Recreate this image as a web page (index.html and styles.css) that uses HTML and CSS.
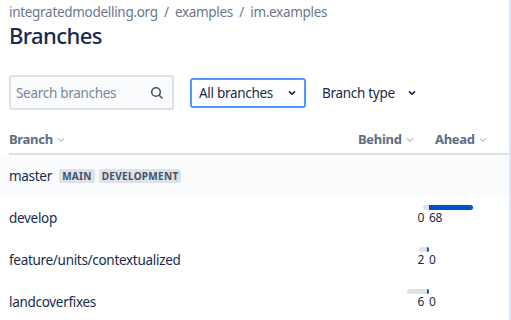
FILE: index.html
```html
<!DOCTYPE html>
<html lang="en">
<head>
    <meta charset="UTF-8">
    <meta name="viewport" content="width=device-width, initial-scale=1.0">
    <title>Branches</title>
    <link rel="stylesheet" href="styles.css">
</head>
<body>
    <div class="page">
        <!-- Breadcrumbs -->
        <div class="crumbs">
            <span>integratedmodelling.org</span>
            <span class="sep">/</span>
            <span>examples</span>
            <span class="sep">/</span>
            <span>im.examples</span>
        </div>
        <h1>Branches</h1>

        <!-- Filters -->
        <div class="filters">
            <div class="search">
                <span class="placeholder">Search branches</span>
                <svg width="14" height="14" viewBox="0 0 14 14"><circle cx="6" cy="6" r="4.3" fill="none" stroke="#42526e" stroke-width="1.6"/><path d="M9.2 9.2 L12 12" stroke="#42526e" stroke-width="1.6" stroke-linecap="round"/></svg>
            </div>
            <div class="select active">
                <span>All branches</span>
                <svg class="chev" width="10" height="10" viewBox="0 0 10 10"><path d="M2.5 3.8 L5 6.2 L7.5 3.8" fill="none" stroke="#172b4d" stroke-width="1.6" stroke-linecap="round" stroke-linejoin="round"/></svg>
            </div>
            <div class="select plain">
                <span>Branch type</span>
                <svg class="chev" width="10" height="10" viewBox="0 0 10 10"><path d="M2.5 3.8 L5 6.2 L7.5 3.8" fill="none" stroke="#172b4d" stroke-width="1.6" stroke-linecap="round" stroke-linejoin="round"/></svg>
            </div>
        </div>

        <!-- Table -->
        <div class="table">
            <div class="head">
                <div class="col-name">Branch <svg class="sort" width="10" height="10" viewBox="0 0 10 10"><path d="M2.5 3.8 L5 6.2 L7.5 3.8" fill="none" stroke="#c1c7d0" stroke-width="1.3" stroke-linecap="round"/></svg></div>
                <div class="col-behind">Behind <svg class="sort" width="10" height="10" viewBox="0 0 10 10"><path d="M2.5 3.8 L5 6.2 L7.5 3.8" fill="none" stroke="#c1c7d0" stroke-width="1.3" stroke-linecap="round"/></svg></div>
                <div class="col-ahead">Ahead <svg class="sort" width="10" height="10" viewBox="0 0 10 10"><path d="M2.5 3.8 L5 6.2 L7.5 3.8" fill="none" stroke="#c1c7d0" stroke-width="1.3" stroke-linecap="round"/></svg></div>
            </div>

            <div class="row main-row">
                <div class="col-name">master <span class="lozenge">Main</span><span class="lozenge">Development</span></div>
            </div>

            <div class="row">
                <div class="col-name">develop</div>
                <div class="diverge">
                    <div class="bars"><span class="behind" style="width:6px"></span><span class="ahead wide" style="width:44px"></span></div>
                    <div class="nums"><span class="n-behind">0</span><span class="n-ahead">68</span></div>
                </div>
            </div>

            <div class="row">
                <div class="col-name">feature/units/contextualized</div>
                <div class="diverge">
                    <div class="bars"><span class="behind" style="width:8px"></span><span class="ahead" style="width:2px"></span></div>
                    <div class="nums"><span class="n-behind">2</span><span class="n-ahead">0</span></div>
                </div>
            </div>

            <div class="row">
                <div class="col-name">landcoverfixes</div>
                <div class="diverge">
                    <div class="bars"><span class="behind" style="width:20px"></span><span class="ahead" style="width:2px"></span></div>
                    <div class="nums"><span class="n-behind">6</span><span class="n-ahead">0</span></div>
                </div>
            </div>
        </div>
    </div>
</body>
</html>
```

FILE: styles.css
```css
body {
    margin: 0;
    background-color: #fff;
    color: #172b4d;
    font-family: "Noto Sans", "Open Sans", sans-serif;
    letter-spacing: -0.3px;
}
.page {
    width: 500px;
    height: 320px;
    padding-left: 9px;
    border-right: 2px solid #dde8f6;
    overflow: hidden;
}
.crumbs {
    padding-top: 2px;
    font-size: 13.5px;
    line-height: 20px;
    color: #6b778c;
}
.crumbs .sep {
    margin: 0 3px;
}
h1 {
    margin: -2px 0 0;
    font-size: 22px;
    font-weight: 500;
    line-height: 30px;
    letter-spacing: -0.6px;
    color: #172b4d;
}
.filters {
    display: flex;
    align-items: center;
    margin-top: 25px;
}
.search {
    width: 148px;
    height: 31px;
    padding: 0 8px 0 5px;
    display: flex;
    align-items: center;
    justify-content: space-between;
    background-color: #fafbfc;
    border: 2px solid #dfe1e6;
    border-radius: 3px;
}
.search .placeholder {
    font-size: 13.5px;
    color: #7a869a;
}
.select {
    display: flex;
    align-items: center;
    font-size: 13.5px;
    color: #172b4d;
}
.select.active {
    margin-left: 16px;
    height: 26px;
    width: 98px;
    padding: 0 7px;
    border: 2px solid #4c9aff;
    border-radius: 3px;
    justify-content: space-between;
}
.select.plain {
    margin-left: 16px;
}
.select.plain .chev {
    margin-left: 12px;
}
.table {
    margin-top: 15px;
    margin-right: -2px;
}
.head {
    display: flex;
    align-items: center;
    height: 28px;
    border-bottom: 2px solid #dfe1e6;
    font-size: 13px;
    font-weight: 700;
    color: #5e6c84;
}
.head .col-name {
    flex: 1;
}
.head .col-behind {
    width: 77px;
}
.head .col-ahead {
    width: 76px;
}
.sort {
    vertical-align: -1px;
}
.row {
    display: flex;
    align-items: center;
    height: 42px;
    font-size: 13.5px;
    margin-left: -9px;
    padding-left: 9px;
}
.main-row {
    background-color: #fafbfc;
}
.row .col-name {
    flex: 1;
}
.lozenge {
    display: inline-block;
    margin-left: 4px;
    padding: 0 3px;
    font-size: 10px;
    font-weight: 700;
    line-height: 14px;
    letter-spacing: 0.3px;
    text-transform: uppercase;
    color: #42526e;
    background-color: #dfe1e6;
    border-radius: 3px;
    vertical-align: 1px;
}
.diverge {
    width: 100px;
    margin-right: 32px;
    margin-bottom: 5px;
}
.bars {
    display: flex;
    height: 5px;
}
.bars .behind {
    margin-left: auto;
    height: 5px;
    background-color: #dfe1e6;
    border-radius: 3px 0 0 3px;
}
.bars .ahead {
    height: 5px;
    margin-right: 50px;
    background-color: #0052cc;
    border-radius: 0 3px 3px 0;
}
.bars .ahead.wide {
    margin-right: 6px;
}
.nums {
    display: flex;
    font-size: 12px;
    line-height: 16px;
    color: #172b4d;
}
.n-behind {
    display: inline-block;
    text-align: right;
    padding-right: 5px;
    width: 45px;
}
```
